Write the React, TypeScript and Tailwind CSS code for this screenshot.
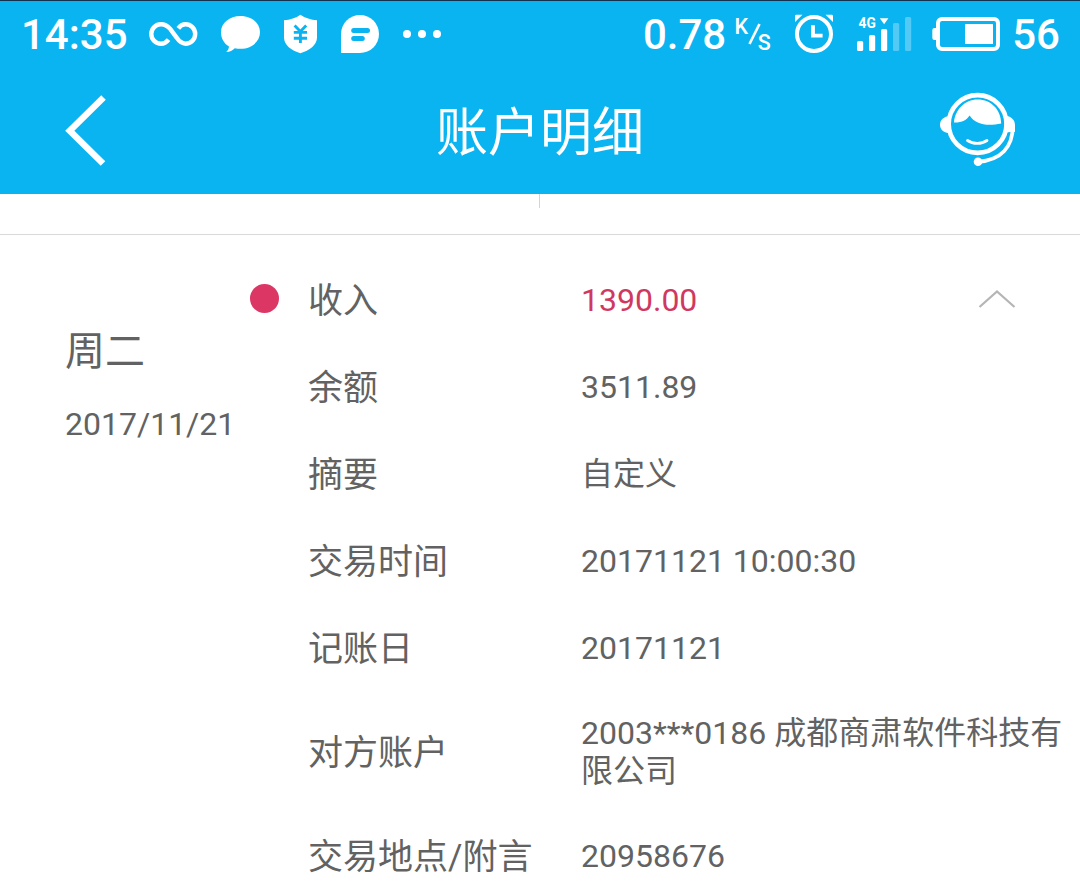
import { useState } from 'react'
import clsx from 'clsx'

interface DetailRow {
  label: string
  value: string
  tall?: boolean
}

const rows: DetailRow[] = [
  { label: '余额', value: '3511.89' },
  { label: '摘要', value: '自定义' },
  { label: '交易时间', value: '20171121 10:00:30' },
  { label: '记账日', value: '20171121' },
  { label: '对方账户', value: '2003***0186 成都商肃软件科技有限公司', tall: true },
  { label: '交易地点/附言', value: '20958676' },
]

function InfinityIcon() {
  return (
    <svg className="ml-[21px] w-[50px] h-[28px]" viewBox="148 21 50 28" fill="none" stroke="currentColor" strokeWidth="4.4">
      <path d="M168.6 40.6C166.5 43.3 164 44.7 161 44.7A9.7 9.7 0 0 1 161 25.3C165 25.3 167.6 27 170.2 29.9L176.6 38.6C179.2 42.4 181.5 44.7 185.5 44.7A9.7 9.7 0 0 0 185.5 25.3C182.6 25.3 180.4 26.5 178.3 29.4" />
    </svg>
  )
}

function ChatIcon() {
  return (
    <svg className="ml-[22px] w-[42px] h-[38px]" viewBox="220 15 42 38" fill="currentColor">
      <path d="M240.5 16C251.5 16 260 23 260 32.2C260 41.5 251.5 48.8 240.5 48.8C238.5 48.8 236.6 48.7 234.8 48.3C232.5 50.6 230 52 226.2 52C228 50.5 228.8 48.7 229 46.5C224 43.5 221 38.4 221 32.2C221 23 229.5 16 240.5 16Z" />
    </svg>
  )
}

function ShieldYenIcon() {
  return (
    <svg className="ml-[20px] w-[36px] h-[40px]" viewBox="282 14 36 40">
      <path fill="currentColor" d="M300.4 14.8C305 18 311 20 317 20.3V37.5C317 45 309.5 50.5 300.4 53.2C291.3 50.5 284 45 284 37.5V20.3C290 20 296 18 300.4 14.8Z" />
      <path fill="none" stroke="#0ab4f1" strokeWidth="2.9" d="M294.6 25.5L300.4 31.5L306.2 25.5M300.4 31V43M293.8 32.4H307M293.8 38.2H307" />
    </svg>
  )
}

function MessageIcon() {
  return (
    <svg className="ml-[22px] w-[40px] h-[40px]" viewBox="340 14 40 40">
      <path fill="currentColor" d="M341 53V34A19 19 0 1 1 360 53Z" />
      <path stroke="#0ab4f1" strokeWidth="5" strokeLinecap="round" d="M353.7 30.5H367.5M353.7 38.4H362.3" />
    </svg>
  )
}

function AlarmIcon() {
  return (
    <svg className="ml-[21px] w-[42px] h-[42px]" viewBox="793 13 42 42" fill="none" stroke="currentColor">
      <circle cx="814" cy="34" r="17" strokeWidth="4" />
      <path strokeWidth="3.8" d="M813 25.3V35.6H822.6" />
      <path fill="currentColor" stroke="none" d="M795 22V15.7Q795.3 14.8 796.3 14.8H802.5ZM833 22V15.7Q832.7 14.8 831.7 14.8H825.5Z" />
    </svg>
  )
}

function SignalIcon() {
  return (
    <svg className="ml-[21px] w-[56px] h-[38px]" viewBox="856 15 56 38" fill="currentColor">
      <text x="858.6" y="28" fontSize="14.5" fontWeight="700" fontFamily="Roboto, sans-serif" textLength="17.2" lengthAdjust="spacingAndGlyphs">4G</text>
      <path d="M879.8 18.3H888.4L884.1 24.3Z" />
      <rect x="857" y="41" width="6.2" height="10" rx="1.5" />
      <rect x="869" y="35" width="6.2" height="16" rx="1.5" />
      <rect x="881" y="29" width="6.2" height="22" rx="1.5" />
      <rect x="893" y="23" width="6.2" height="28" rx="1.5" opacity="0.3" />
      <rect x="905" y="17" width="6.2" height="34" rx="1.5" opacity="0.3" />
    </svg>
  )
}

function BatteryIcon() {
  return (
    <svg className="ml-[20px] w-[68px] h-[36px]" viewBox="932 16 68 36">
      <rect x="938" y="19" width="60" height="30" rx="4" fill="none" stroke="currentColor" strokeWidth="4" />
      <path fill="currentColor" d="M937 28V40H934.5Q932.3 40 932.3 38V30Q932.3 28 934.5 28Z" />
      <rect x="965" y="24" width="28" height="20" rx="0.5" fill="currentColor" />
    </svg>
  )
}

function ServiceIcon() {
  return (
    <svg className="w-[76px] h-[76px]" viewBox="940 92 76 76" fill="none" stroke="currentColor">
      <circle cx="977.6" cy="124" r="28.9" strokeWidth="4.6" />
      <path fill="currentColor" stroke="none" d="M954 122.5C955 109.5 965 99.5 977.5 99.5C991.5 99.5 1001 110 1001.2 123.4C987 126.5 975.5 124.5 969.6 115.5C966.5 120.2 962 122.7 954 122.5Z" />
      <path fill="currentColor" stroke="none" d="M950.5 116C943.5 116.3 940 120.3 940 124.8C940 129.5 943.5 133 950.5 133.3ZM1004.5 115.5C1011.5 116.3 1015 120 1015 125V132C1011 131.5 1007 132.5 1004.5 133.5Z" />
      <path strokeWidth="3.8" d="M1012.8 126C1012.8 147 1001 160 978 161.8" />
      <path strokeWidth="2.8" strokeLinecap="round" d="M967.5 140.5C973 144.3 981.5 144.3 987 140.5" />
      <circle cx="978" cy="161.8" r="4.3" fill="currentColor" stroke="none" />
    </svg>
  )
}

function StatusBar() {
  return (
    <div className="flex items-center h-[66px] pl-[21px] pr-[20px] text-[42px] leading-none font-medium">
      <span className="w-[106px] pt-[2px] whitespace-nowrap">14:35</span>
      <InfinityIcon />
      <ChatIcon />
      <ShieldYenIcon />
      <MessageIcon />
      <div className="flex gap-[7px] ml-[23px]">
        <i className="w-2 h-2 rounded-full bg-white" />
        <i className="w-2 h-2 rounded-full bg-white" />
        <i className="w-2 h-2 rounded-full bg-white" />
      </div>
      <span className="ml-auto pt-[2px] whitespace-nowrap">0.78</span>
      <svg className="ml-[8px] w-[38px] h-[50px] overflow-visible" viewBox="734 9 38 50" fill="currentColor">
        <text x="734.6" y="33.6" fontSize="21.5" fontWeight="500" fontFamily="Roboto, sans-serif">K</text>
        <path stroke="currentColor" strokeWidth="2.6" d="M749.5 44L759.5 24" />
        <text x="757.8" y="49.8" fontSize="21.5" fontWeight="500" fontFamily="Roboto, sans-serif">S</text>
      </svg>
      <AlarmIcon />
      <SignalIcon />
      <BatteryIcon />
      <span className="ml-[12px] pt-[2px]">56</span>
    </div>
  )
}

export default function App() {
  const [open, setOpen] = useState(true)

  return (
    <div className="w-[1080px] h-[892px] overflow-hidden bg-white text-[#626262] font-[Roboto,'Noto_Sans_CJK_SC',sans-serif]">
      <header className="h-[194px] bg-[#0ab4f1] border-t border-[#12324f] text-white">
        <StatusBar />
        <div className="flex items-center justify-between h-[126px] pl-[64px] pr-[64px]">
          <button className="w-[76px]">
            <svg className="w-[44px] h-[72px]" viewBox="64 94 44 72" fill="none" stroke="currentColor" strokeWidth="6.5">
              <path d="M103.5 97.5L69.8 130.7L103 163.5" />
            </svg>
          </button>
          <h1 className="pt-[7px] text-[52px] leading-none">账户明细</h1>
          <button className="w-[76px]">
            <ServiceIcon />
          </button>
        </div>
      </header>

      {/* Bottom edge of the summary block */}
      <div className="h-[41px] border-b border-[#d9d9d9]">
        <div className="w-[540px] h-[14px] border-r border-[#d4d4d4]" />
      </div>

      <section className="flex pt-[20px]">
        <div className="w-[250px] pl-[65px] pt-[69px]">
          <div className="text-[40px] leading-[56px]">周二</div>
          <div className="mt-[24px] text-[32px] leading-[40px]">2017/11/21</div>
        </div>
        <div className="flex-1">
          <div className="flex items-center h-[87px]">
            <span className="w-[29px] h-[29px] rounded-full bg-[#dc3664]" />
            <span className="w-[273px] ml-[29px] pt-[7px] text-[35px]">收入</span>
            <span className="pt-[3px] text-[32px] text-[#d0395f]">1390.00</span>
            <button className="ml-auto mr-[64px]" onClick={() => setOpen(!open)}>
              <svg className={clsx('w-[38px] h-[20px]', !open && 'rotate-180')} viewBox="0 0 38 20" fill="none" stroke="#b5b5b5" strokeWidth="2.2">
                <path d="M1.5 18L19 2.5L36.5 18" />
              </svg>
            </button>
          </div>
          {open && rows.map((row) => (
            <div key={row.label} className={clsx('flex items-center pl-[58px]', row.tall ? 'h-[121px]' : 'h-[87px]')}>
              <span className="w-[273px] shrink-0 pt-[7px] text-[35px]">{row.label}</span>
              <span className="w-[490px] pt-[2px] text-[32px] leading-[38px]">{row.value}</span>
            </div>
          ))}
        </div>
      </section>
    </div>
  )
}
